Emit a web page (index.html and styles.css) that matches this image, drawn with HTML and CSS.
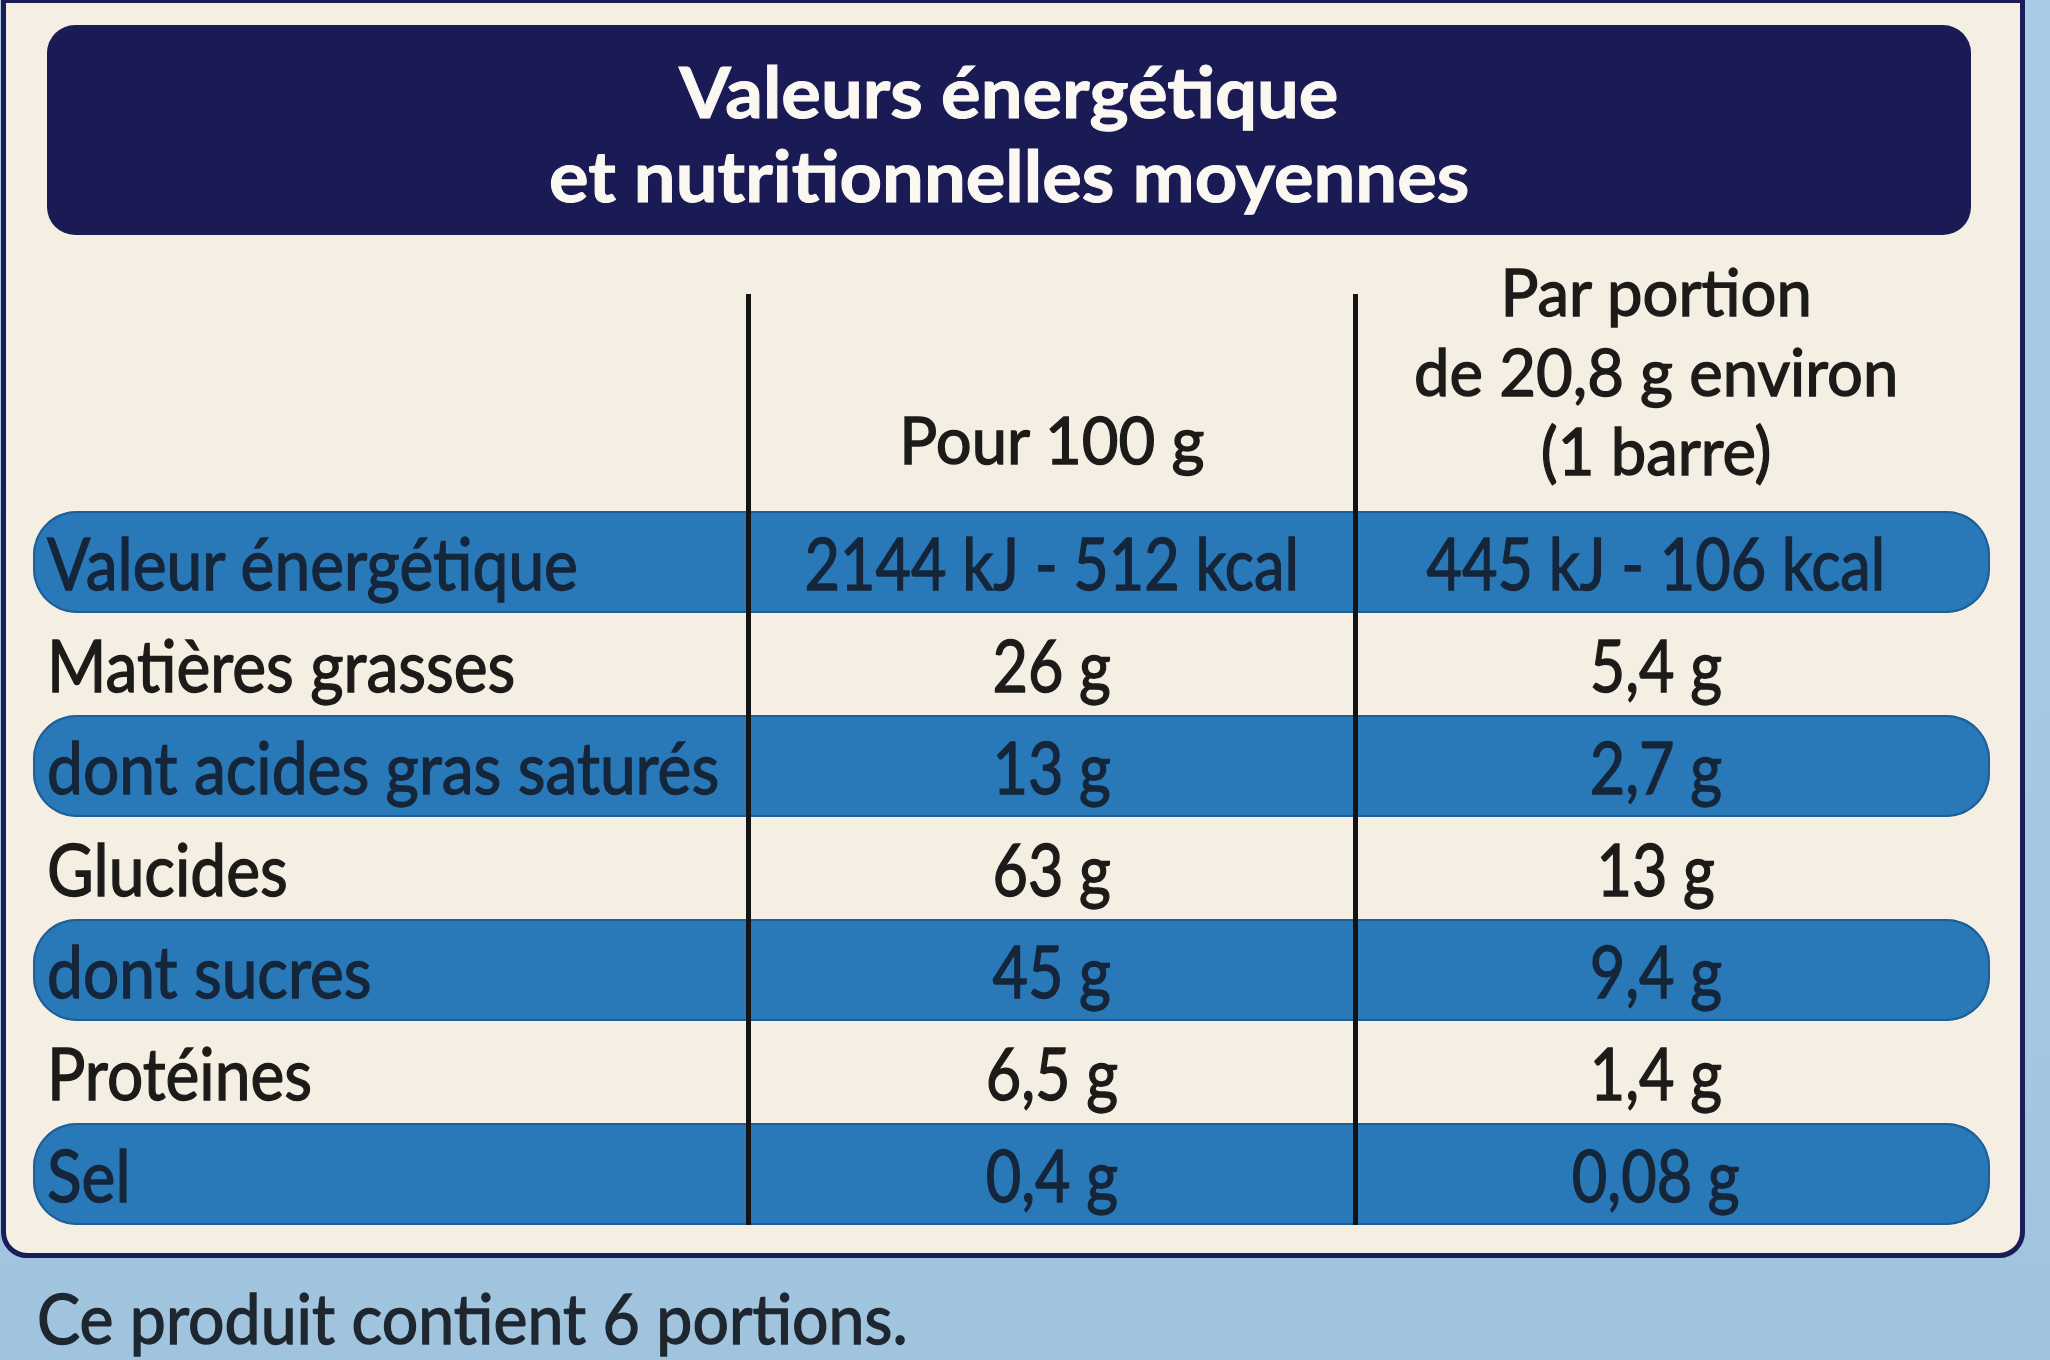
FILE: index.html
```html
<!DOCTYPE html>
<html lang="fr">
<head>
<meta charset="utf-8">
<title>Valeurs nutritionnelles</title>
<link rel="stylesheet" href="styles.css">
</head>
<body>
<div class="card">
  <div class="title">
    <span class="tline">Valeurs énergétique</span>
    <span class="tline">et nutritionnelles moyennes</span>
  </div>
  <div class="table">
    <div class="row head">
      <div class="cell label"></div>
      <div class="cell val h2"><span class="t c hd">Pour 100 g</span></div>
      <div class="cell val h3">
        <span class="t c hd">Par portion</span>
        <span class="t c hd">de 20,8 g environ</span>
        <span class="t c hd">(1 barre)</span>
      </div>
    </div>
    <div class="row band">
      <div class="cell label"><span class="t l">Valeur énergétique</span></div>
      <div class="cell val"><span class="t c">2144 kJ - 512 kcal</span></div>
      <div class="cell val v3"><span class="t c">445 kJ - 106 kcal</span></div>
    </div>
    <div class="row">
      <div class="cell label"><span class="t l">Matières grasses</span></div>
      <div class="cell val"><span class="t c">26 g</span></div>
      <div class="cell val v3"><span class="t c">5,4 g</span></div>
    </div>
    <div class="row band">
      <div class="cell label"><span class="t l">dont acides gras saturés</span></div>
      <div class="cell val"><span class="t c">13 g</span></div>
      <div class="cell val v3"><span class="t c">2,7 g</span></div>
    </div>
    <div class="row">
      <div class="cell label"><span class="t l">Glucides</span></div>
      <div class="cell val"><span class="t c">63 g</span></div>
      <div class="cell val v3"><span class="t c">13 g</span></div>
    </div>
    <div class="row band">
      <div class="cell label"><span class="t l">dont sucres</span></div>
      <div class="cell val"><span class="t c">45 g</span></div>
      <div class="cell val v3"><span class="t c">9,4 g</span></div>
    </div>
    <div class="row">
      <div class="cell label"><span class="t l">Protéines</span></div>
      <div class="cell val"><span class="t c">6,5 g</span></div>
      <div class="cell val v3"><span class="t c">1,4 g</span></div>
    </div>
    <div class="row band">
      <div class="cell label"><span class="t l">Sel</span></div>
      <div class="cell val"><span class="t c">0,4 g</span></div>
      <div class="cell val v3"><span class="t c">0,08 g</span></div>
    </div>
  </div>
</div>
<div class="footer"><span class="t f">Ce produit contient 6 portions.</span></div>
</body>
</html>
```
FILE: styles.css
```css
html, body {
  margin: 0;
  padding: 0;
}
body {
  width: 2050px;
  height: 1360px;
  overflow: hidden;
  background: linear-gradient(180deg, #a9cce6 0%, #a5c8e2 70%, #a1c4de 100%);
  font-family: "Lato", "Open Sans", "DejaVu Sans", sans-serif;
  color: #1d1b19;
}
.card {
  box-sizing: border-box;
  width: 2024px;
  margin: -2px 0 0 1px;
  border: 5px solid #1b1d58;
  border-radius: 0 0 26px 26px;
  background: #f5eee2;
  padding: 22px 0 28px 0;
}
.title {
  margin: 0 49px 0 41px;
  height: 210px;
  box-sizing: border-box;
  padding: 24px 0 18px 0;
  background: #1a1b55;
  border-radius: 28px;
  display: flex;
  flex-direction: column;
  align-items: center;
}
.tline {
  display: block;
  font-weight: 700;
  font-size: 70px;
  line-height: 84px;
  color: #fbf8f2;
  white-space: nowrap;
  transform: scaleX(1.06);
  -webkit-text-stroke: 1px #fbf8f2;
}
.table {
  margin: 59px 0 0 27px;
  width: 1957px;
}
.row {
  display: grid;
  grid-template-columns: 713px 607px 637px;
  grid-template-rows: 102px;
  height: 102px;
}
.row.band {
  background: #2979b9;
  border-radius: 44px;
  box-shadow: inset 0 0 0 2px #1d5f98;
  color: #15263a;
}
.row.head {
  grid-template-rows: 217px;
  height: 217px;
}
.cell {
  font-size: 72px;
  line-height: 102px;
  white-space: nowrap;
  min-height: 0;
}
.cell.label {
  padding-left: 14px;
}
.cell.val {
  border-left: 5px solid #141414;
  display: flex;
  flex-direction: column;
  align-items: center;
}
.cell.v3 {
  padding-right: 36px;
}
.head .cell {
  font-size: 66px;
  line-height: 79.2px;
  justify-content: flex-end;
}
.head .h2 {
  padding-bottom: 33px;
}
.head .h3 {
  padding-bottom: 22px;
  padding-right: 36px;
}
.t {
  display: inline-block;
  white-space: nowrap;
  -webkit-text-stroke: 1.4px currentColor;
  flex: none;
}
.t.c {
  transform: scaleX(0.85);
  transform-origin: center;
}
.t.c.hd {
  transform: scaleX(0.96);
}
.t.l {
  transform: scaleX(0.89);
  transform-origin: left center;
}
.t.f {
  transform: scaleX(0.92);
  transform-origin: left center;
}
.footer {
  margin-top: 17px;
  padding-left: 37px;
  font-size: 70px;
  line-height: 84px;
  color: #1e2630;
  white-space: nowrap;
}
```
